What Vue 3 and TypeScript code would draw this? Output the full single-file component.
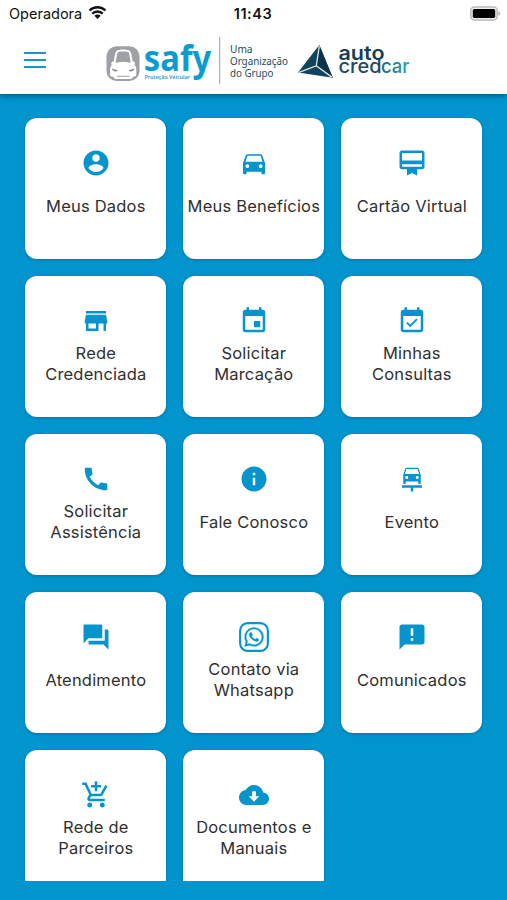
<script setup lang="ts">
interface Tile {
  label: string
  lines: string[]
  path: string
  framed?: boolean
}

const tiles: Tile[] = [
  { label: 'dados', lines: ['Meus Dados'], path: 'M12 2C6.48 2 2 6.48 2 12s4.48 10 10 10 10-4.48 10-10S17.52 2 12 2zm0 3c1.66 0 3 1.34 3 3s-1.34 3-3 3-3-1.34-3-3 1.34-3 3-3zm0 14.2c-2.5 0-4.71-1.28-6-3.22.03-1.99 4-3.08 6-3.08 1.99 0 5.97 1.09 6 3.08-1.29 1.94-3.5 3.22-6 3.22z' },
  { label: 'beneficios', lines: ['Meus Benefícios'], path: 'M18.600 6.010C18.400 5.420 17.900 5 17.200 5H6.800c-.66 0-1.210.42-1.420 1.010L3.200 12v8c0 .55.45 1 1 1h.9c.55 0 1-.45 1-1v-1h11.800v1c0 .55.45 1 1 1h.9c.55 0 1-.45 1-1v-8l-2.200-5.990zM6.700 16c-.83 0-1.500-.67-1.500-1.500S5.870 13 6.700 13s1.500.67 1.500 1.500S7.530 16 6.700 16zm10.600 0c-.83 0-1.500-.67-1.500-1.500s.67-1.500 1.500-1.500 1.500.67 1.500 1.500-.67 1.500-1.500 1.500zM5.200 11l1.500-4.800h10.600L18.800 11H5.200z' },
  { label: 'cartao', lines: ['Cartão Virtual'], path: 'M20 2H4c-1.11 0-2 .89-2 2v11c0 1.11.89 2 2 2h4v5l4-2 4 2v-5h4c1.11 0 2-.89 2-2V4c0-1.11-.89-2-2-2zm0 13H4v-2h16v2zm0-5H4V4h16v6z' },
  { label: 'rede', lines: ['Rede', 'Credenciada'], path: 'M20 4H4v2h16V4zm1 10v-2l-1-5H4l-1 5v2h1v6h10v-6h4v6h2v-6h1zm-9 4H6v-4h6v4z' },
  { label: 'marcacao', lines: ['Solicitar', 'Marcação'], path: 'M17 12h-5v5h5v-5zM16 1v2H8V1H6v2H5c-1.11 0-1.99.9-1.99 2L3 19c0 1.1.89 2 2 2h14c1.1 0 2-.9 2-2V5c0-1.1-.9-2-2-2h-1V1h-2zm3 18H5V8h14v11z' },
  { label: 'consultas', lines: ['Minhas', 'Consultas'], path: 'M16.53 11.06L15.47 10l-4.88 4.88-2.12-2.12-1.06 1.06L10.59 17l5.94-5.94zM19 3h-1V1h-2v2H8V1H6v2H5c-1.11 0-1.99.9-1.99 2L3 19c0 1.1.89 2 2 2h14c1.1 0 2-.9 2-2V5c0-1.1-.9-2-2-2zm0 16H5V8h14v11z' },
  { label: 'assistencia', lines: ['Solicitar', 'Assistência'], path: 'M20.01 15.38c-1.23 0-2.42-.2-3.53-.56-.35-.12-.74-.03-1.01.24l-1.57 1.97c-2.83-1.35-5.48-3.9-6.89-6.83l1.95-1.66c.27-.28.35-.67.24-1.02-.37-1.11-.56-2.3-.56-3.53 0-.54-.45-.99-.99-.99H4.19C3.65 3 3 3.24 3 3.99 3 13.28 10.73 21 20.01 21c.71 0 .99-.63.99-1.18v-3.45c0-.54-.45-.99-.99-.99z' },
  { label: 'fale', lines: ['Fale Conosco'], path: 'M12 2C6.48 2 2 6.48 2 12s4.48 10 10 10 10-4.48 10-10S17.52 2 12 2zm1 15h-2v-6h2v6zm0-8h-2V7h2v2z' },
  { label: 'evento', lines: ['Evento'], path: 'M16.22 12c.68 0 1.22-.54 1.22-1.22s-.54-1.22-1.22-1.22-1.22.54-1.22 1.22.55 1.22 1.22 1.22zM6.56 10.78c0 .68.54 1.22 1.22 1.22S9 11.46 9 10.78s-.54-1.22-1.22-1.22-1.22.54-1.22 1.22zM7.61 4L6.28 8h11.43l-1.33-4H7.61zm8.67-1s.54.01.92.54c.02.02.03.04.05.07.07.11.14.24.19.4C17.66 4.66 19 8.69 19 8.69v6.5c0 .45-.35.81-.78.81h-.44c-.44 0-.78-.36-.78-.81V14H7v1.19c0 .45-.35.81-.78.81h-.44C5.35 16 5 15.64 5 15.19v-6.5l1.55-4.68c.05-.16.12-.28.19-.4.02-.03.03-.05.05-.07C7.17 3.01 7.71 3 7.71 3h8.57zM4 17.01h16V19h-7v3h-2v-3H4v-1.99z' },
  { label: 'atendimento', lines: ['Atendimento'], path: 'M21 6h-2v9H6v2c0 .55.45 1 1 1h11l4 4V7c0-.55-.45-1-1-1zm-4 6V3c0-.55-.45-1-1-1H3c-.55 0-1 .45-1 1v14l4-4h10c.55 0 1-.45 1-1z' },
  { label: 'whatsapp', lines: ['Contato via', 'Whatsapp'], framed: true, path: 'M19.05 4.91A9.816 9.816 0 0 0 12.04 2c-5.46 0-9.91 4.45-9.91 9.91 0 1.75.46 3.45 1.32 4.95L2.05 22l5.25-1.38c1.45.79 3.08 1.21 4.74 1.21 5.46 0 9.91-4.45 9.91-9.91 0-2.65-1.03-5.14-2.9-7.01zm-7.01 15.24c-1.48 0-2.93-.4-4.2-1.15l-.3-.18-3.12.82.83-3.04-.2-.31a8.264 8.264 0 0 1-1.26-4.38c0-4.54 3.7-8.24 8.24-8.24 2.2 0 4.27.86 5.82 2.42a8.183 8.183 0 0 1 2.41 5.83c.02 4.54-3.68 8.23-8.22 8.23zM16.56 13.99c-.25-.12-1.47-.72-1.69-.81-.23-.08-.39-.12-.56.12-.17.25-.64.81-.78.97-.14.17-.29.19-.54.06-.25-.12-1.05-.39-1.99-1.23-.74-.66-1.23-1.47-1.38-1.72-.14-.25-.02-.38.11-.51.11-.11.25-.29.37-.43s.17-.25.25-.41c.08-.17.04-.31-.02-.43s-.56-1.34-.76-1.84c-.2-.48-.41-.42-.56-.43h-.48c-.17 0-.43.06-.66.31-.22.25-.86.85-.86 2.07 0 1.22.89 2.4 1.01 2.56.12.17 1.75 2.67 4.23 3.74.59.26 1.05.41 1.41.52.59.19 1.13.16 1.56.1.48-.07 1.47-.6 1.67-1.18.21-.58.21-1.07.14-1.18s-.22-.16-.47-.28z' },
  { label: 'comunicados', lines: ['Comunicados'], path: 'M20 2H4c-1.1 0-1.99.9-1.99 2L2 22l4-4h14c1.1 0 2-.9 2-2V4c0-1.1-.9-2-2-2zm-7 13h-2v-2.2h2V15zm0-4h-2V5h2v6z' },
  { label: 'parceiros', lines: ['Rede de', 'Parceiros'], path: 'M11 9h2V6h3V4h-3V1h-2v3H8v2h3v3zm-4 9c-1.1 0-1.99.9-1.99 2S5.9 22 7 22s2-.9 2-2-.9-2-2-2zm10 0c-1.1 0-1.99.9-1.99 2s.89 2 1.99 2 2-.9 2-2-.9-2-2-2zm-9.83-3.25l.03-.12.9-1.63h7.45c.75 0 1.41-.41 1.75-1.03l3.86-7.01L19.42 4h-.01l-1.1 2-2.76 5H8.53l-.13-.27L6.16 6l-.95-2-.94-2H1v2h2l3.6 7.59-1.35 2.45c-.16.28-.25.61-.25.96 0 1.1.9 2 2 2h12v-2H7.42c-.13 0-.25-.11-.25-.25z' },
  { label: 'documentos', lines: ['Documentos e', 'Manuais'], path: 'M19.35 10.04C18.67 6.59 15.64 4 12 4 9.11 4 6.6 5.64 5.35 8.04 2.34 8.36 0 10.91 0 14c0 3.31 2.69 6 6 6h13c2.76 0 5-2.24 5-5 0-2.64-2.05-4.78-4.65-4.96zM16.2 13L12 17.4 7.8 13h2.7V9h3v4h2.7z' },
]
</script>

<template>
  <div class="screen">
    <header class="top">
      <div class="status">
        <div class="carrier">
          <span>Operadora</span>
          <svg class="wifi" viewBox="0 0 20 15">
            <path d="M1.6 5.4a12 12 0 0 1 16.8 0M4.5 8.7a7.8 7.8 0 0 1 11 0" fill="none" stroke="#111" stroke-width="2.5" />
            <path d="M6.7 11a4.7 4.7 0 0 1 6.6 0L10 14.3z" fill="#111" />
          </svg>
        </div>
        <span class="clock">11:43</span>
        <svg class="battery" viewBox="0 0 31 15">
          <rect x=".8" y=".9" width="26.4" height="13" rx="3.6" fill="#eee" stroke="#bbb" stroke-width="1.5" />
          <rect x="2.8" y="2.9" width="22.4" height="9" rx="1.6" fill="#000" />
          <path d="M28.3 5q2.1.8 2.1 2.4t-2.1 2.4z" fill="#bbb" />
        </svg>
      </div>
      <div class="bar">
        <button class="menu" aria-label="Menu"><i></i><i></i><i></i></button>
        <svg class="brand" viewBox="100 30 320 60">
          <defs>
            <linearGradient id="carTone" x1="0" x2="1">
              <stop offset="0" stop-color="#18697f" />
              <stop offset="1" stop-color="#27a8b8" />
            </linearGradient>
          </defs>
          <rect x="106.5" y="46.2" width="33" height="34.8" rx="10" fill="#9da0a5" />
          <path d="M114.8 61.500l1.200-7q.7-3.700 4.300-3.900 2.900-.3 5.800 0 3.600.2 4.300 3.900l1.200 7" fill="none" stroke="#fff" stroke-width="2" stroke-linecap="round" />
          <path d="M112 61.500h4l-1.200 3h-3.800zM134.300 61.500h-4l1.200 3h3.800z" fill="#fff" />
          <path d="M114 63.300q9.200-3 18.400 0 3.900 2.500 3.900 5.500v6q0 1.600-1.600 1.600h-1.300l-1 1.600q-.5 1-1.700 1h-15q-1.200 0-1.700-1l-1-1.600h-1.300q-1.600 0-1.600-1.600v-6q0-3 3.900-5.500z" fill="#fff" />
          <path d="M111.800 68.500l6 1.700q-1 1.600-3.300 1.100-2.400-.5-2.700-2.800zM134.600 68.500l-6 1.700q1 1.600 3.300 1.100 2.400-.5 2.700-2.800z" fill="#858a90" />
          <path d="M117 76.300h12.400" stroke="#9da0a5" stroke-width="1" />
          <text class="safy" x="143.800" y="71.300" textLength="67.500" lengthAdjust="spacingAndGlyphs">safy</text>
          <text class="tag" x="144.500" y="79" textLength="45.500" lengthAdjust="spacingAndGlyphs">Proteção Veicular</text>
          <path d="M219.700 37v47" stroke="#91a6ad" stroke-width="1" />
          <g class="group">
            <text x="230" y="52.700" textLength="22.500" lengthAdjust="spacingAndGlyphs">Uma</text>
            <text x="230" y="64.800" textLength="58" lengthAdjust="spacingAndGlyphs">Organização</text>
            <text x="230" y="76.800" textLength="43.500" lengthAdjust="spacingAndGlyphs">do Grupo</text>
          </g>
          <path d="M319.300 45L298 72.500l34.800 5.200z" fill="#12445c" />
          <path d="M319.300 45l-3.300 21 16.800 11.700z" fill="#0d3348" />
          <path d="M319.300 46l-3 19.800L299 72.300M316.300 65.800l15.500 11.300" fill="none" stroke="#dfe9e8" stroke-width="1.300" />
          <text class="auto" x="338.500" y="60.300" textLength="46" lengthAdjust="spacingAndGlyphs">auto</text>
          <text class="cred" x="338.500" y="72.600" textLength="43" lengthAdjust="spacingAndGlyphs">cred</text>
          <text class="cred car" x="381" y="72.600" textLength="28.500" lengthAdjust="spacingAndGlyphs">car</text>
        </svg>
      </div>
    </header>
    <main class="grid">
      <section v-for="tile in tiles" :key="tile.label" class="tile">
        <svg class="icon" viewBox="0 0 24 24">
          <template v-if="tile.framed">
            <rect x=".9" y=".9" width="22.200" height="22.200" rx="6" fill="none" stroke="#0594cc" stroke-width="1.700" />
            <path :d="tile.path" transform="translate(2.900 2.900) scale(.76)" stroke="#0594cc" stroke-width=".4" />
          </template>
          <path v-else fill-rule="evenodd" :d="tile.path" />
        </svg>
        <div class="label"><span v-for="line in tile.lines" :key="line">{{ line }}</span></div>
      </section>
    </main>
  </div>
</template>

<style>
body {
  margin: 0;
  background: #0194cd;
}
</style>

<style scoped>
.screen {
  box-sizing: border-box;
  display: flex;
  flex-direction: column;
  width: 507px;
  height: 900px;
  padding-bottom: 19px;
  overflow: hidden;
  background: #0194cd;
  font-family: Inter, "Liberation Sans", sans-serif;
}
.top {
  flex: none;
  height: 94px;
  background: #fff;
  box-shadow: 0 1px 6px rgba(0, 0, 0, 0.5);
}
.status {
  display: grid;
  grid-template-columns: 1fr auto 1fr;
  align-items: center;
  height: 27px;
  padding: 0 6px 0 7px;
  color: #111;
  font-size: 14.5px;
}
.carrier {
  display: flex;
  align-items: center;
  gap: 6px;
  padding-left: 2px;
}
.wifi {
  width: 19px;
  height: 15px;
  margin-top: -2px;
}
.clock {
  margin-right: 2px;
  font-weight: 600;
  letter-spacing: 0.5px;
}
.battery {
  justify-self: end;
  width: 31px;
  height: 15px;
  margin-top: -1px;
}
.bar {
  display: flex;
  align-items: flex-start;
  height: 66px;
  padding: 3px 0 0 24px;
}
.menu {
  display: flex;
  flex-direction: column;
  gap: 5px;
  width: 76px;
  padding: 22px 54px 0 0;
  border: 0;
  background: none;
}
.menu i {
  width: 22px;
  height: 2px;
  background: #1597cb;
}
.brand {
  width: 320px;
  height: 60px;
}
.brand text {
  font-family: "Noto Sans", "Open Sans", sans-serif;
}
.brand .safy {
  font-size: 35px;
  font-weight: 700;
  fill: #0b9bcf;
}
.brand .tag {
  font-size: 5.8px;
  font-weight: 600;
  fill: #219fd0;
}
.brand .group {
  font-size: 10.8px;
  fill: #234e60;
}
.brand .auto {
  font-family: Inter, sans-serif;
  font-size: 19.5px;
  font-weight: 600;
  fill: #153f55;
}
.brand .cred {
  font-family: Inter, sans-serif;
  font-size: 19px;
  font-weight: 500;
  fill: #1b4c61;
}
.brand .car {
  fill: url(#carTone);
}
.grid {
  display: grid;
  flex: 1;
  grid-template-columns: repeat(3, 141.3px);
  grid-auto-rows: 141px;
  gap: 17px 16.7px;
  align-content: start;
  min-height: 0;
  padding: 24.3px 24px 0 25.2px;
  overflow: hidden;
}
.tile {
  display: flex;
  flex-direction: column;
  align-items: center;
  padding-top: 30px;
  box-sizing: border-box;
  border-radius: 12px;
  background: #fff;
  box-shadow: 0 1px 3px rgba(0, 0, 0, 0.22);
}
.icon {
  flex: none;
  width: 30px;
  height: 30px;
  fill: #0594cc;
}
.label {
  display: flex;
  flex-direction: column;
  justify-content: center;
  height: 42px;
  margin-top: 7px;
  color: #303030;
  font-size: 16.5px;
  line-height: 21px;
  letter-spacing: 0.2px;
  text-align: center;
  white-space: nowrap;
}
</style>
